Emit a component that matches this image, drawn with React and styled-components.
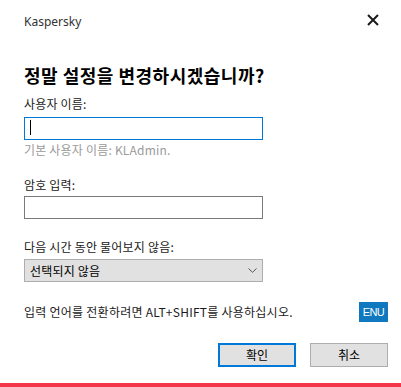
import React from "react";
import styled, { createGlobalStyle } from "styled-components";

const GlobalStyle = createGlobalStyle`
  html, body {
    margin: 0;
    padding: 0;
    background: #ffffff;
  }
  body {
    font-family: "Noto Sans CJK KR", "Noto Sans", sans-serif;
    font-size: 12px;
    color: #1a1a1a;
  }
`;

const Window = styled.div`
  width: 401px;
  height: 387px;
  display: flex;
  flex-direction: column;
  background: #fff;
  box-sizing: border-box;
  overflow: hidden;
`;

const TitleBar = styled.div`
  height: 42px;
  display: flex;
  align-items: center;
  justify-content: space-between;
  padding: 0 22px 0 24px;
  box-sizing: border-box;
`;

const AppName = styled.span`
  font-family: "Noto Sans", "Open Sans", sans-serif;
  font-size: 12px;
  line-height: 16px;
  color: #333;
  margin-top: 2px;
`;

const CloseButton = styled.button`
  border: 0;
  background: transparent;
  padding: 0;
  width: 12px;
  height: 12px;
  display: flex;
  margin-top: -2px;
  cursor: pointer;
`;

const Content = styled.div`
  display: flex;
  flex-direction: column;
  padding: 0 13px 0 24px;
`;

const Heading = styled.h1`
  margin: 21px 0 0;
  font-size: 18px;
  line-height: 24px;
  font-weight: bold;
  letter-spacing: 0.5px;
  color: #000;
`;

const Label = styled.div`
  font-size: 12px;
  line-height: 16px;
  letter-spacing: 0.2px;
  color: ${(p) => (p.$muted ? "#9a9a9a" : "#1a1a1a")};
  margin-top: ${(p) => p.$gap}px;
`;

const Field = styled.div`
  width: 239px;
  height: 23px;
  box-sizing: border-box;
  border: 1px solid ${(p) => (p.$focused ? "#0078d7" : "#7a7a7a")};
  background: #fff;
  margin-top: ${(p) => p.$gap}px;
  position: relative;
`;

const Caret = styled.span`
  position: absolute;
  left: 5px;
  top: 2px;
  width: 1px;
  height: 15px;
  background: #000;
`;

const Select = styled.div`
  width: 239px;
  height: 23px;
  box-sizing: border-box;
  border: 1px solid #adadad;
  background: #e1e1e1;
  margin-top: 4px;
  display: flex;
  align-items: center;
  justify-content: space-between;
  padding: 0 5px 0 5px;
  font-size: 12px;
  line-height: 16px;
  letter-spacing: 0.2px;
  color: #000;
`;

const LangRow = styled.div`
  margin-top: 20px;
  height: 20px;
  display: flex;
  align-items: center;
  justify-content: space-between;
`;

const LangText = styled.span`
  font-size: 12px;
  line-height: 16px;
  letter-spacing: 0.25px;
  color: #1a1a1a;
`;

const Badge = styled.span`
  width: 29px;
  height: 20px;
  background: #1078be;
  color: #fff;
  display: flex;
  align-items: center;
  justify-content: center;
  font-family: "Liberation Sans", sans-serif;
  font-size: 11px;
  letter-spacing: -0.6px;
`;

const Buttons = styled.div`
  margin-top: 21px;
  display: flex;
  justify-content: flex-end;
  gap: 14px;
`;

const Button = styled.button`
  width: 78px;
  height: 24px;
  box-sizing: border-box;
  background: #e1e1e1;
  border: ${(p) => (p.$primary ? "2px solid #0078d7" : "1px solid #adadad")};
  font-family: "Noto Sans CJK KR", sans-serif;
  font-size: 12px;
  line-height: 16px;
  color: #000;
  padding: 0;
  cursor: pointer;
`;

const RedBar = styled.div`
  margin-top: auto;
  height: 4px;
  background: #f4364b;
`;

const CloseIcon = () => (
  <svg width="12" height="12" viewBox="0 0 12 12">
    <path d="M1 1L11 11M11 1L1 11" stroke="#1a1a1a" strokeWidth="2" />
  </svg>
);

const Chevron = () => (
  <svg width="9" height="5" viewBox="0 0 9 5">
    <path d="M0.5 0.5L4.5 4.3L8.5 0.5" fill="none" stroke="#555" strokeWidth="1" />
  </svg>
);

export default function App() {
  return (
    <>
      <GlobalStyle />
      <Window>
        <TitleBar>
          <AppName>Kaspersky</AppName>
          <CloseButton aria-label="닫기">
            <CloseIcon />
          </CloseButton>
        </TitleBar>
        <Content>
          <Heading>정말 설정을 변경하시겠습니까?</Heading>
          <Label $gap={9}>사용자 이름:</Label>
          <Field $focused $gap={5}>
            <Caret />
          </Field>
          <Label $muted $gap={2}>기본 사용자 이름: KLAdmin.</Label>
          <Label $gap={19}>암호 입력:</Label>
          <Field $gap={3} />
          <Label $gap={20}>다음 시간 동안 물어보지 않음:</Label>
          <Select>
            <span>선택되지 않음</span>
            <Chevron />
          </Select>
          <LangRow>
            <LangText>입력 언어를 전환하려면 ALT+SHIFT를 사용하십시오.</LangText>
            <Badge>ENU</Badge>
          </LangRow>
          <Buttons>
            <Button $primary>확인</Button>
            <Button>취소</Button>
          </Buttons>
        </Content>
        <RedBar />
      </Window>
    </>
  );
}
